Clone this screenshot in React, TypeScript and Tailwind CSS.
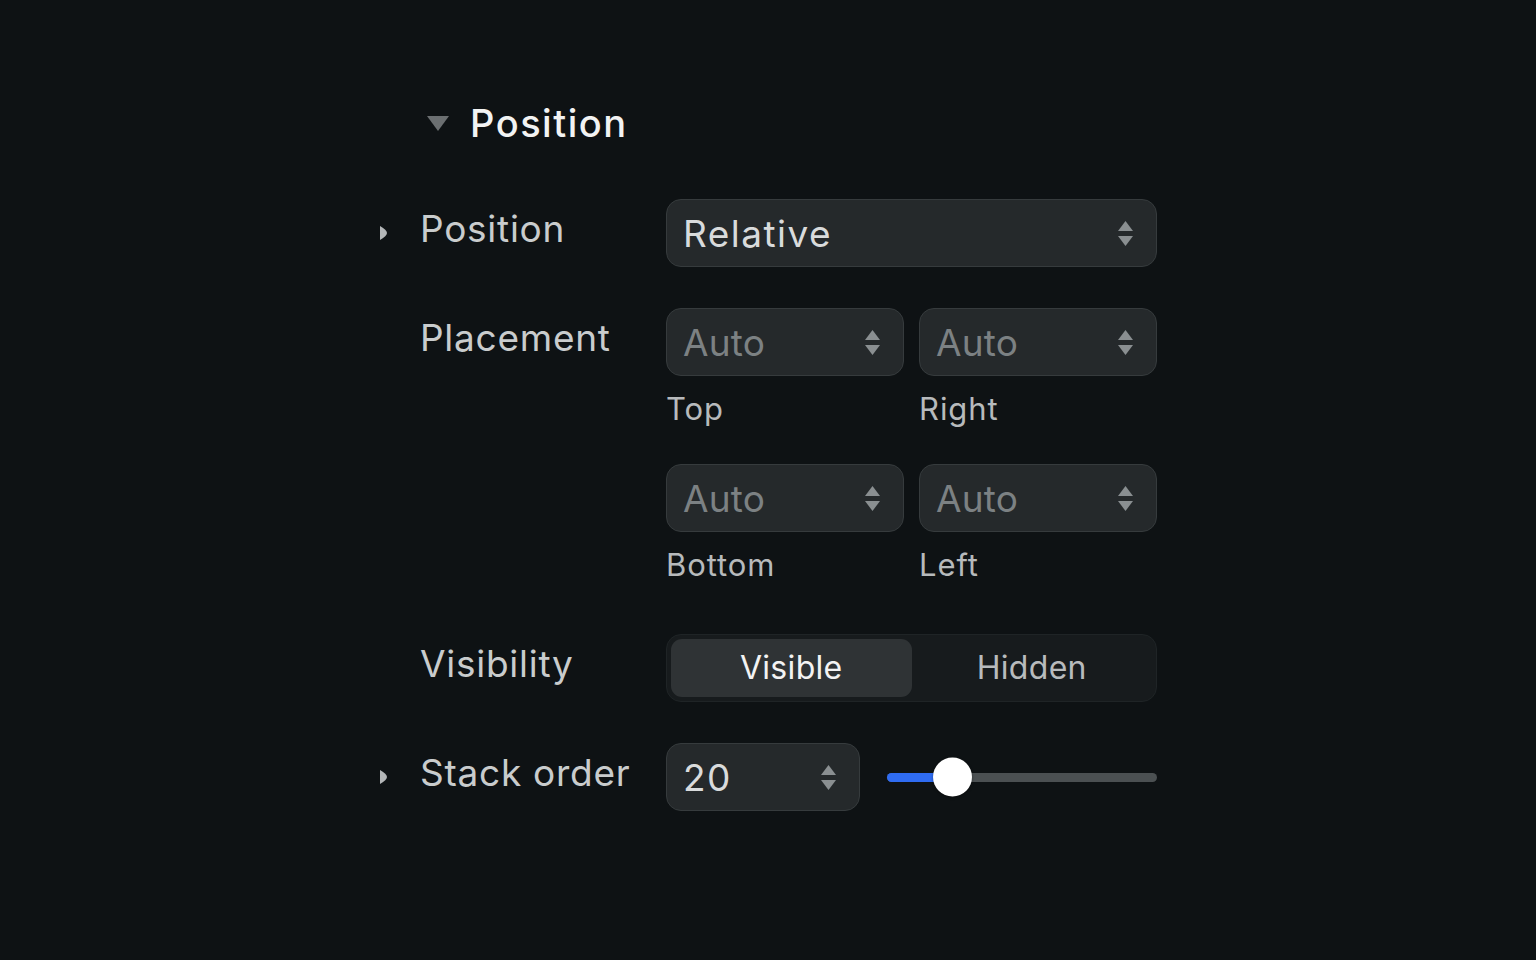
import React from 'react'

function Stepper() {
  return (
    <svg width="15" height="25" viewBox="0 0 15 25" className="shrink-0">
      <path d="M7.5 0 L15 10 L0 10 Z" fill="#8a8f91" />
      <path d="M0 15 L15 15 L7.5 25 Z" fill="#8a8f91" />
    </svg>
  )
}

function RowArrow() {
  return (
    <svg width="7" height="14" viewBox="0 0 7 14">
      <path d="M0 0 Q7 4 7 7 Q7 10 0 14 Z" fill="#b3b6b8" />
    </svg>
  )
}

function SelectBox({ value, muted, className = '' }: { value: string; muted?: boolean; className?: string }) {
  return (
    <div
      className={
        'h-[68px] rounded-[15px] border border-[#363b3d] bg-[#25292b] pl-[16px] pr-[23px] flex items-center justify-between ' +
        className
      }
    >
      <span
        className={
          'text-[37px] leading-none ' +
          (muted ? 'text-[#7c8183] tracking-[0.005em]' : 'text-[#d9dbdc] tracking-[0.04em]')
        }
      >
        {value}
      </span>
      <Stepper />
    </div>
  )
}

export default function App() {
  return (
    <div className="min-h-screen w-full bg-[#0e1214] font-['Inter','Liberation_Sans',sans-serif]">
      <div className="w-[777px] ml-[380px] pt-[100px]">
        {/* Section header */}
        <div className="flex items-center h-[46px] pl-[47px]">
          <svg width="22" height="15" viewBox="0 0 22 15">
            <path d="M0 0 L22 0 L11 15 Z" fill="#6b6f71" />
          </svg>
          <span className="ml-[21px] text-[38px] leading-[46px] font-medium tracking-[0.04em] text-[#f2f3f3]">
            Position
          </span>
        </div>

        {/* Position */}
        <div className="flex mt-[53px]">
          <div className="w-[40px] h-[68px] flex items-center">
            <RowArrow />
          </div>
          <div className="w-[246px] mt-[8px] text-[37px] leading-[44px] tracking-[0.02em] text-[#c9cccd]">Position</div>
          <SelectBox value="Relative" className="w-[491px]" />
        </div>

        {/* Placement */}
        <div className="flex mt-[41px]">
          <div className="w-[40px]" />
          <div className="w-[246px] mt-[8px] text-[37px] leading-[44px] tracking-[0.02em] text-[#c9cccd]">Placement</div>
          <div className="w-[491px] grid grid-cols-2 gap-x-[15px]">
            <div>
              <SelectBox value="Auto" muted />
              <div className="mt-[15px] text-[31px] leading-[36px] tracking-[0.03em] text-[#b7babc]">Top</div>
            </div>
            <div>
              <SelectBox value="Auto" muted />
              <div className="mt-[15px] text-[31px] leading-[36px] tracking-[0.03em] text-[#b7babc]">Right</div>
            </div>
            <div className="mt-[37px]">
              <SelectBox value="Auto" muted />
              <div className="mt-[15px] text-[31px] leading-[36px] tracking-[0.03em] text-[#b7babc]">Bottom</div>
            </div>
            <div className="mt-[37px]">
              <SelectBox value="Auto" muted />
              <div className="mt-[15px] text-[31px] leading-[36px] tracking-[0.03em] text-[#b7babc]">Left</div>
            </div>
          </div>
        </div>

        {/* Visibility */}
        <div className="flex mt-[51px]">
          <div className="w-[40px]" />
          <div className="w-[246px] mt-[8px] text-[37px] leading-[44px] tracking-[0.02em] text-[#c9cccd]">Visibility</div>
          <div className="w-[491px] h-[68px] rounded-[15px] bg-[#171b1d] border border-[#1f2426] p-[4px] grid grid-cols-2">
            <div className="rounded-[11px] bg-[#2f3335] flex items-center justify-center text-[32px] tracking-[0.01em] text-[#f3f3f3]">
              Visible
            </div>
            <div className="flex items-center justify-center text-[32px] tracking-[0.01em] text-[#b8bbbd]">Hidden</div>
          </div>
        </div>

        {/* Stack order */}
        <div className="flex mt-[41px]">
          <div className="w-[40px] h-[68px] flex items-center">
            <RowArrow />
          </div>
          <div className="w-[246px] mt-[8px] text-[37px] leading-[44px] tracking-[0.02em] text-[#c9cccd]">Stack order</div>
          <div className="w-[491px] flex items-center">
            <SelectBox value="20" className="w-[194px]" />
            <div className="ml-[27px] flex-1 relative h-[9px] rounded-full bg-[#4b5052]">
              <div className="absolute left-0 top-0 h-full w-[66px] rounded-full bg-[#2f6cf2]" />
              <div className="absolute left-[46px] top-1/2 -translate-y-1/2 w-[39px] h-[39px] rounded-full bg-white shadow-[0_1px_3px_rgba(0,0,0,0.4)]" />
            </div>
          </div>
        </div>
      </div>
    </div>
  )
}
